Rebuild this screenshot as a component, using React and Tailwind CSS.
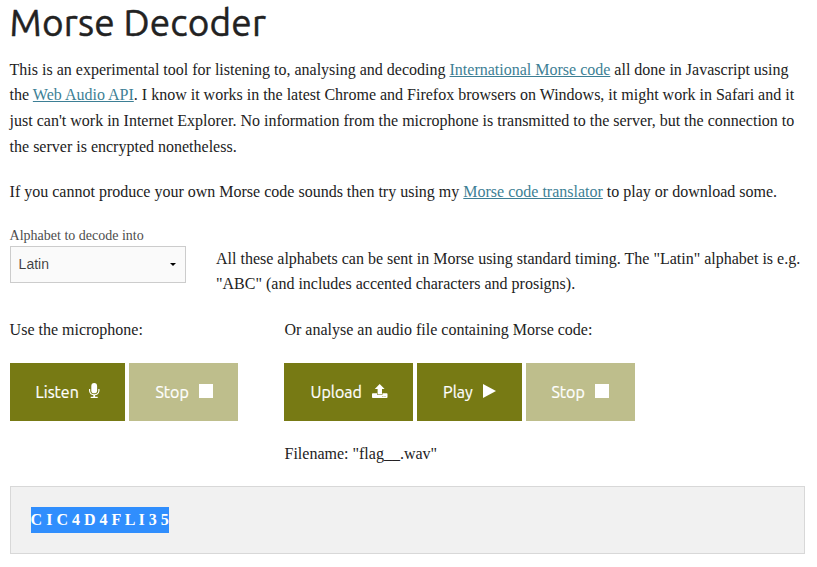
const icons = {
  mic: (
    <>
      <rect x="2.3" y="0" width="5.8" height="10.3" rx="2.9" />
      <path d="M.6 6v2a4.7 4.4 0 0 0 9.3 0V6" fill="none" stroke="currentColor" strokeWidth="1.2" />
      <path d="M4.3 12h1.8v1.7h2.6V15H1.7v-1.3h2.6z" />
    </>
  ),
  stop: <path d="M0 1h14v14H0z" />,
  play: <path d="M0 1 13 8 0 15z" />,
  upload: (
    <>
      <path d="M7.7 1 12.6 6H10v5.3H5.6V6H2.8z" />
      <path fillRule="evenodd" d="M.8 10.3H5v1.5h5.5v-1.5h4.2q.8 0 .8.8V14q0 1-.8 1H.8Q0 15 0 14v-2.9q0-.8.8-.8zM10.5 13v.7h.8V13zM12.6 13v.7h.8V13z" />
    </>
  ),
};

function Icon({ name, width }) {
  return (
    <svg width={width} height="16" viewBox={`0 0 ${width} 16`} fill="currentColor" className="mb-[2px] shrink-0">
      {icons[name]}
    </svg>
  );
}

function Button({ label, icon, iconWidth, className }) {
  return (
    <button className={`flex h-[58px] items-center justify-between font-['Ubuntu','Open_Sans',sans-serif] text-[16px] text-white ${className}`}>
      <span className="pt-[2px] [-webkit-text-stroke:0.2px_white]">{label}</span>
      <Icon name={icon} width={iconWidth} />
    </button>
  );
}

function Link({ children }) {
  return <a href="#" className="text-[#3d7f95] underline">{children}</a>;
}

export default function App() {
  return (
    <main className="h-[567px] w-[817px] overflow-hidden bg-white pl-[9.6px] font-['Liberation_Serif',serif] text-[16px] leading-[25.6px] text-[#222]">
      <h1 className="h-[56.8px] font-['Ubuntu','Noto_Sans',sans-serif] text-[37px] leading-[46px] tracking-[0.18px] [-webkit-text-stroke:0.45px_#222]">Morse Decoder</h1>
      <p className="mb-5 whitespace-nowrap">
        This is an experimental tool for listening to, analysing and decoding <Link>International Morse code</Link> all done in Javascript using<br />
        the <Link>Web Audio API</Link>. I know it works in the latest Chrome and Firefox browsers on Windows, it might work in Safari and it<br />
        just can't work in Internet Explorer. No information from the microphone is transmitted to the server, but the connection to<br />
        the server is encrypted nonetheless.
      </p>
      <p className="mb-5 whitespace-nowrap">
        If you cannot produce your own Morse code sounds then try using my <Link>Morse code translator</Link> to play or download some.
      </p>
      <div className="flex h-[92.2px] whitespace-nowrap">
        <div className="w-[206.4px]">
          <div className="h-[21px] text-[14px] leading-[21px] text-[#4d4d4d]">Alphabet to decode into</div>
          <div className="flex h-[37px] w-[176px] items-center justify-between border border-[#ccc] bg-[#fafafa] pr-[9px] pl-2 font-['Liberation_Sans',sans-serif] text-[14px] text-black/75">
            <span className="pt-[2px]">Latin</span>
            <svg width="6" height="3" viewBox="0 0 6 3" className="text-black"><path d="M0 0h6L3 3z" fill="currentColor" /></svg>
          </div>
        </div>
        <p className="pt-[21px]">
          All these alphabets can be sent in Morse using standard timing. The "Latin" alphabet is e.g.<br />
          "ABC" (and includes accented characters and prosigns).
        </p>
      </div>
      <div className="flex h-[169.4px] whitespace-nowrap">
        <section className="w-[274.9px]">
          <p className="mb-5">Use the microphone:</p>
          <div className="flex gap-1">
            <Button label="Listen" icon="mic" iconWidth={11} className="w-[115px] bg-[#777a14] pr-[25px] pl-[26px]" />
            <Button label="Stop" icon="stop" iconWidth={14} className="w-[109px] bg-[#bebe8c] pr-[25px] pl-[26.9px]" />
          </div>
        </section>
        <section>
          <p className="mb-5">Or analyse an audio file containing Morse code:</p>
          <div className="mb-5 flex gap-1">
            <Button label="Upload" icon="upload" iconWidth={16} className="w-[129px] bg-[#777a14] pr-[25px] pl-[26px]" />
            <Button label="Play" icon="play" iconWidth={14} className="w-[105px] bg-[#777a14] pr-[25.5px] pl-[25.6px]" />
            <Button label="Stop" icon="stop" iconWidth={14} className="w-[109px] bg-[#bebe8c] pr-[26.3px] pl-[25px]" />
          </div>
          <p>Filename: "flag__.wav"</p>
        </section>
      </div>
      <div className="h-[67.6px] w-[795px] border border-[#d8d8d8] bg-[#f1f1f1] p-5 leading-[25.6px] font-bold text-white">
        <span className="inline-block bg-[#308efd]">C I C 4 D 4 F L I 3 5</span>
      </div>
    </main>
  );
}
